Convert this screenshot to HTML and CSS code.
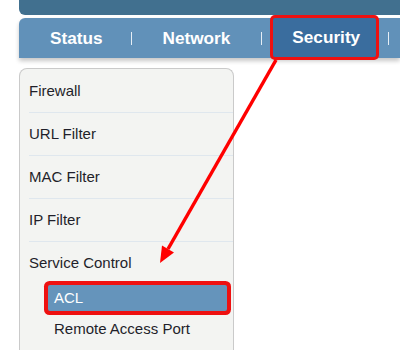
FILE: index.html
```html
<!DOCTYPE html>
<html lang="en">
<head>
    <meta charset="UTF-8">
    <title>Security - Service Control</title>
    <link rel="stylesheet" href="styles.css">
</head>
<body>
    <div class="page">
        <div class="topbar"></div>
        <div class="nav">
            <div class="tab">Status</div>
            <div class="sep"></div>
            <div class="tab wide">Network</div>
            <div class="sep"></div>
            <div class="tab active"><span class="hl">Security</span></div>
            <div class="sep"></div>
        </div>

        <div class="sidebar">
            <ul class="menu">
                <li>Firewall</li>
                <li>URL Filter</li>
                <li>MAC Filter</li>
                <li>IP Filter</li>
                <li class="open">Service Control
                    <ul class="submenu">
                        <li class="selected">ACL</li>
                        <li>Remote Access Port</li>
                    </ul>
                </li>
            </ul>
        </div>
    </div>

    <!-- annotation arrow drawn over the page -->
    <svg class="arrow" width="400" height="350" viewBox="0 0 400 350">
        <line x1="276" y1="60" x2="168" y2="249" stroke="#f00" stroke-width="3.5"/>
        <polygon points="160,263 174,252.5 162,245.5" fill="#f00"/>
    </svg>
</body>
</html>
```

FILE: styles.css
```css
body {
    margin: 0;
    overflow: hidden;
    width: 400px;
    height: 350px;
    position: relative;
    background-color: #fff;
    font-family: "Liberation Sans", Arial, sans-serif;
}
.page {
    padding-left: 19px;
}
.topbar {
    height: 15px;
    background-color: #41708f;
    border-bottom-left-radius: 6px;
}
.nav {
    margin-top: 3px;
    height: 40px;
    display: flex;
    align-items: center;
    white-space: nowrap;
    background-color: #6191b9;
    border-top-left-radius: 6px;
    box-shadow: 0 3px 4px rgba(0,0,0,0.22);
}
.tab {
    flex-shrink: 0;
    padding: 0 28px 0 31px;
    color: white;
    font-weight: bold;
    font-size: 17.2px;
    line-height: 40px;
}
.tab.wide {
    padding: 0 31px;
}
.sep {
    flex-shrink: 0;
    width: 1px;
    height: 13px;
    background-color: #e6eef5;
}
.tab.active {
    padding: 0 28px 0 30px;
}
.tab.active .hl {
    display: inline-block;
    height: 39px;
    line-height: 39px;
    margin: 0 -16px 0 -19px;
    padding: 0 16px 0 19px;
    background-color: #3a6d9e;
    border-radius: 2px;
    box-shadow: 0 0 0 3px #ee1111;
    vertical-align: top;
}
.sidebar {
    margin-top: 10px;
    width: 213px;
    height: 281px;
    background-color: #f3f4f2;
    border: 1px solid #cacaca;
    border-bottom: none;
    border-radius: 8px 8px 0 0;
}
.menu {
    list-style: none;
    margin: 0 0 0 9px;
    padding: 0;
}
.menu > li {
    font-size: 15px;
    line-height: 42px;
    color: #1f1f2a;
    border-bottom: 1px solid #dfe7ee;
}
.menu > li:first-child {
    line-height: 43px;
}
.menu > li.open {
    border-bottom: none;
}
.submenu {
    list-style: none;
    margin: 1px 6px 0 19px;
    padding: 0;
}
.submenu li {
    font-size: 15px;
    line-height: 26px;
    padding-left: 6px;
    margin-top: 5px;
    color: #1f1f2a;
}
.submenu li:first-child {
    margin-top: 0;
}
.submenu li.selected {
    background-color: #6594bb;
    color: white;
    border-radius: 2px;
    box-shadow: 0 0 0 4px #ee1111;
}
.arrow {
    position: absolute;
    left: 0;
    top: 0;
}
```
